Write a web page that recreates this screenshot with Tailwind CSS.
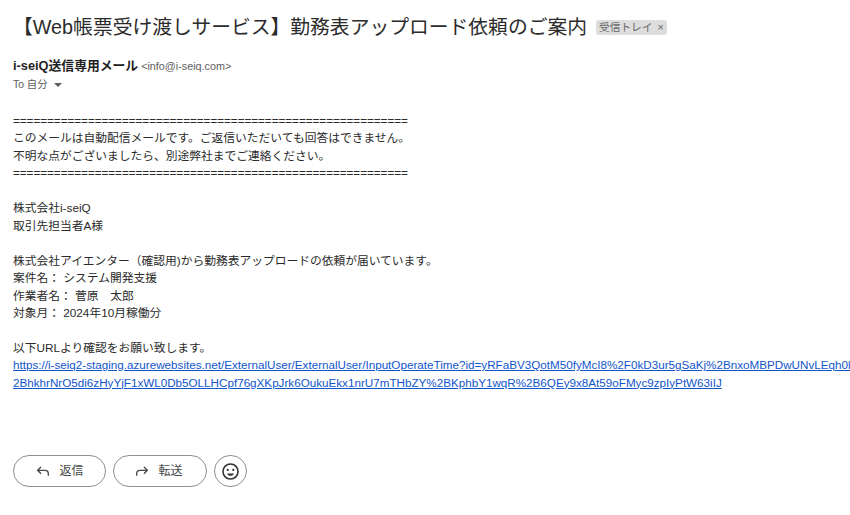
<!DOCTYPE html>
<html lang="ja"><head><meta charset="utf-8"><script src="https://cdn.jsdelivr.net/npm/@tailwindcss/browser@4"></script></head>
<body class="bg-white overflow-hidden">
<div class="w-[850px] h-[515px] overflow-hidden font-['Liberation_Sans','Noto_Sans_CJK_JP',sans-serif] text-[#2a2a2a]">
  <div class="flex items-center pl-[13px] pt-[14px] h-[40px]">
    <h1 class="text-[19.8px] leading-[26px] text-[#2b2b2b] font-normal whitespace-nowrap">【Web帳票受け渡しサービス】勤務表アップロード依頼のご案内</h1>
    <span class="ml-[9px] h-[15px] px-[3px] rounded-[3px] bg-[#dddddd] text-[#666666] text-[10.7px] leading-[15px] whitespace-nowrap">受信トレイ<span class="ml-[5px]">×</span></span>
  </div>
  <div class="pl-[13px] mt-[16px] flex items-baseline h-[20px] leading-[20px] whitespace-nowrap">
    <span class="text-[12.8px] font-bold text-[#1f1f1f]">i-seiQ送信専用メール</span>
    <span class="ml-[3px] text-[10.8px] text-[#5e5e5e]">&lt;info@i-seiq.com&gt;</span>
  </div>
  <div class="pl-[13px] mt-[1px] flex items-center h-[16px] text-[10.4px] text-[#5e5e5e]">To 自分
    <svg class="ml-[6px]" width="8" height="4" viewBox="0 0 8 4"><path d="M0 0h8L4 4z" fill="#5e5e5e"/></svg>
  </div>
  <div class="pl-[13px] mt-[19px] text-[11.75px] leading-[17.45px] whitespace-nowrap">
    <div class="text-[11.66px]">==========================================================</div>
    <div>このメールは自動配信メールです。ご返信いただいても回答はできません。</div>
    <div>不明な点がございましたら、別途弊社までご連絡ください。</div>
    <div class="text-[11.66px]">==========================================================</div>
    <div class="h-[17.45px]"></div>
    <div>株式会社i-seiQ</div>
    <div>取引先担当者A様</div>
    <div class="h-[17.45px]"></div>
    <div>株式会社アイエンター（確認用)から勤務表アップロードの依頼が届いています。</div>
    <div>案件名： システム開発支援</div>
    <div>作業者名： 菅原　太郎</div>
    <div>対象月： 2024年10月稼働分</div>
    <div class="h-[17.45px]"></div>
    <div>以下URLより確認をお願い致します。</div>
    <a class="block text-[11.66px] text-[#1155cc] underline">https://i-seiq2-staging.azurewebsites.net/ExternalUser/ExternalUser/InputOperateTime?id=yRFaBV3QotM50fyMcI8%2F0kD3ur5gSaKj%2BnxoMBPDwUNvLEqh0lQ</a>
    <a class="block text-[11.66px] text-[#1155cc] underline">2BhkhrNrO5di6zHyYjF1xWL0Db5OLLHCpf76gXKpJrk6OukuEkx1nrU7mTHbZY%2BKphbY1wqR%2B6QEy9x8At59oFMyc9zpIyPtW63iIJ</a>
  </div>
  <div class="pl-[13px] mt-[64px] flex items-center gap-[7px]">
    <button class="w-[93px] h-[32px] rounded-full border border-[#8f8f8f] flex items-center justify-center gap-[8px] text-[12px] text-[#444746]">
      <svg width="16" height="16" viewBox="0 0 24 24" fill="none" stroke="#444746" stroke-width="2"><path d="M9 6 4 11l5 5M4 11h11a5 5 0 0 1 5 5v3"/></svg>返信
    </button>
    <button class="w-[94px] h-[32px] rounded-full border border-[#8f8f8f] flex items-center justify-center gap-[8px] pr-[3px] text-[12px] text-[#444746]">
      <svg width="16" height="16" viewBox="0 0 24 24" fill="none" stroke="#444746" stroke-width="2"><path d="M15 6l5 5-5 5M20 11H9a5 5 0 0 0-5 5v3"/></svg>転送
    </button>
    <button class="w-[33px] h-[32px] rounded-full border border-[#8f8f8f] flex items-center justify-center">
      <svg width="19" height="19" viewBox="0 0 24 24" fill="none" stroke="#333333" stroke-width="2"><circle cx="12" cy="12" r="9.5"/><circle cx="8.5" cy="10" r="1.4" fill="#333333" stroke="none"/><circle cx="15.5" cy="10" r="1.4" fill="#333333" stroke="none"/><path d="M7.5 14.5c1 2 2.6 3 4.5 3s3.5-1 4.5-3z" fill="#333333" stroke="none"/></svg>
    </button>
  </div>
</div>
</body></html>
